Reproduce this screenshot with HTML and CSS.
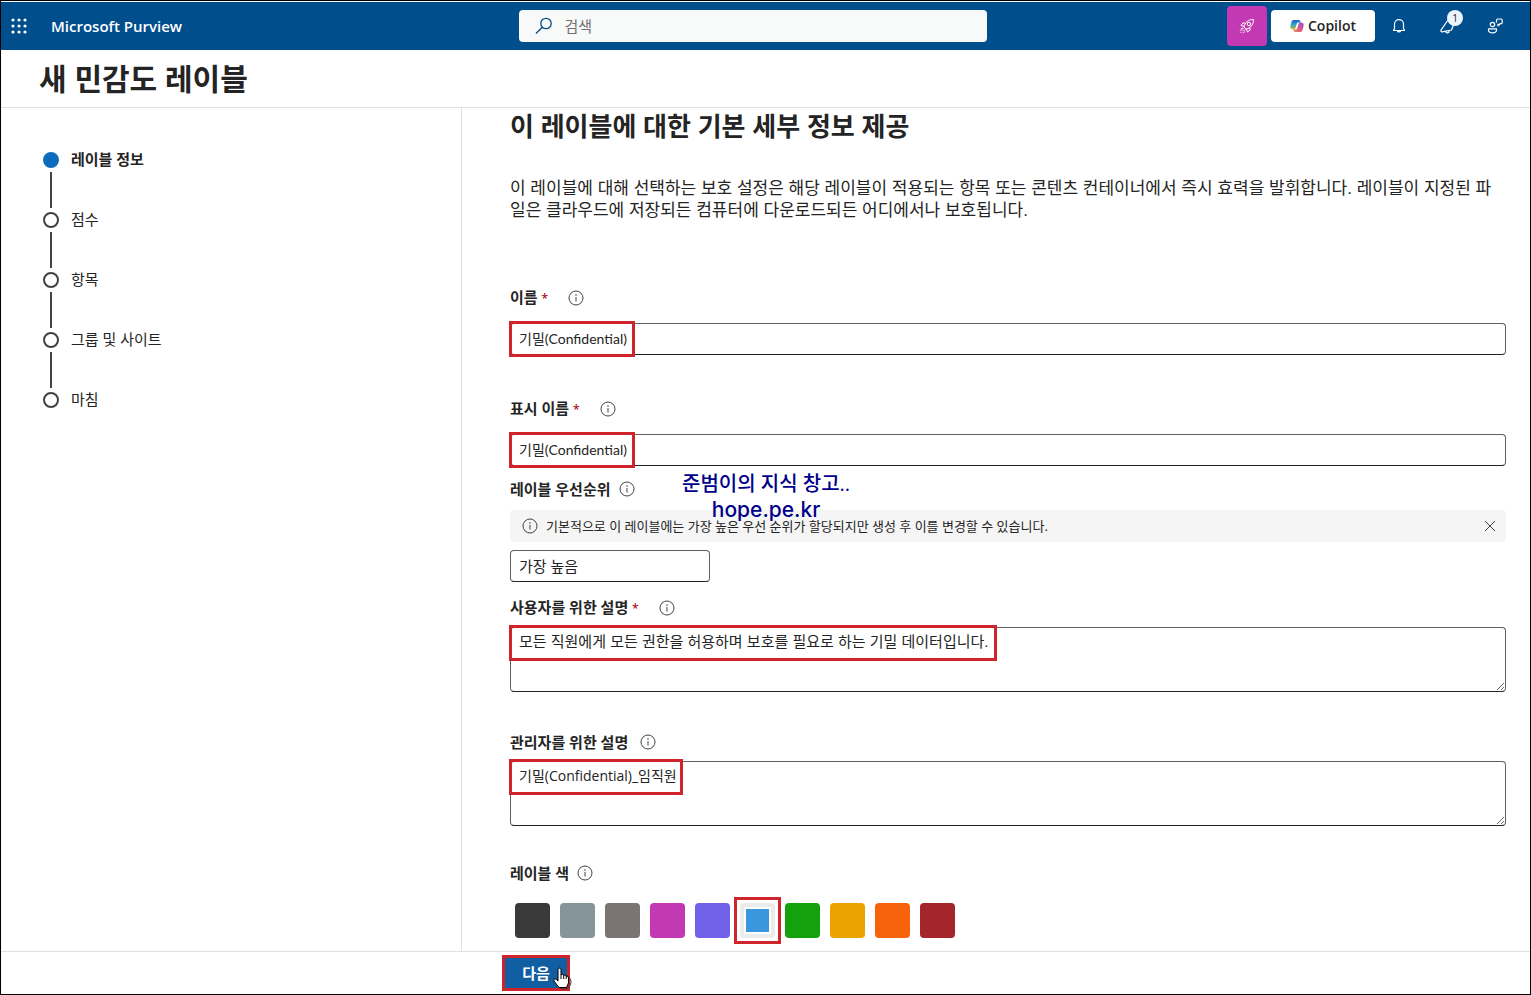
FILE: index.html
```html
<!DOCTYPE html>
<html lang="ko">
<head>
    <meta charset="UTF-8">
    <meta name="viewport" content="width=device-width, initial-scale=1.0">
    <title>Microsoft Purview</title>
    <link rel="stylesheet" href="styles.css">
</head>
<body>
    <svg width="0" height="0" class="sprite" aria-hidden="true">
        <symbol id="info" viewBox="0 0 16 16">
            <circle cx="8" cy="8" r="7" fill="none" stroke="currentColor"/>
            <path d="M8 7v4.500" fill="none" stroke="currentColor"/>
            <circle cx="8" cy="5" r=".8" fill="currentColor"/>
        </symbol>
    </svg>

    <header class="topbar">
        <div class="brand">
            <button class="icon-btn" aria-label="앱 시작 관리자">
                <svg width="16" height="16" viewBox="0 0 16 16" fill="#fff">
                    <circle cx="2" cy="2" r="1.600"/><circle cx="8" cy="2" r="1.600"/><circle cx="14" cy="2" r="1.600"/>
                    <circle cx="2" cy="8" r="1.600"/><circle cx="8" cy="8" r="1.600"/><circle cx="14" cy="8" r="1.600"/>
                    <circle cx="2" cy="14" r="1.600"/><circle cx="8" cy="14" r="1.600"/><circle cx="14" cy="14" r="1.600"/>
                </svg>
            </button>
            <a href="#" class="brand-name">Microsoft Purview</a>
        </div>
        <div class="search">
            <svg width="18" height="18" viewBox="0 0 18 18" fill="none" stroke="#0b4a80" stroke-width="1.300">
                <circle cx="11" cy="6.500" r="5.200"/>
                <path d="M7.300 10.200L1 16.500"/>
            </svg>
            <input type="search" placeholder="검색" aria-label="검색">
        </div>
        <div class="actions">
            <button class="rocket" aria-label="새로운 기능">
                <svg width="16" height="16" viewBox="0 0 16 16" fill="none" stroke="#fff" stroke-linejoin="round" stroke-linecap="round">
                    <path d="M5 8.500C6 4.500 9 1.500 14.500 1.500C14.500 7 11.500 10 7.500 11Z"/>
                    <circle cx="10" cy="6" r="1.700"/>
                    <path d="M6.200 5.200L4 4.800L2 7.500L5 8.500M10.800 9.800L11.200 12L8.500 14L7.500 11M4.500 10L1.500 13M6 11.500L4.500 13M3 10L2 11M5.500 13.800L4.500 14.800M2 14.500h.1"/>
                </svg>
            </button>
            <button class="copilot">
                <svg width="14" height="14" viewBox="0 0 14 14">
                    <defs>
                        <linearGradient id="cool" x1="0" y1="0" x2="0" y2="1">
                            <stop offset="0" stop-color="#1b62d4"/><stop offset=".5" stop-color="#2ba8c9"/><stop offset="1" stop-color="#e5b52c"/>
                        </linearGradient>
                        <linearGradient id="warm" x1="1" y1="0" x2="0" y2="1">
                            <stop offset="0" stop-color="#8c4fe0"/><stop offset=".5" stop-color="#dd5587"/><stop offset="1" stop-color="#f58a42"/>
                        </linearGradient>
                    </defs>
                    <path d="M4 1h4.500c1 0 1.600.600 1.900 1.500l.3 1H8.500c-1 0-1.500.500-1.800 1.500L5.500 9c-.3 1-.8 1.500-1.700 1.500H3C1 10.500 0 9 .4 7L1.500 3C1.900 1.600 2.800 1 4 1Z" fill="url(#cool)"/>
                    <path d="M10 13H5.500c-1 0-1.600-.6-1.900-1.500l-.3-1h2.200c1 0 1.500-.5 1.800-1.500L8.500 5c.3-1 .8-1.500 1.700-1.500h.8c2 0 3 1.500 2.600 3.500L12.500 11c-.4 1.400-1.300 2-2.500 2Z" fill="url(#warm)"/>
                </svg>
                Copilot
            </button>
            <button class="icon-btn" aria-label="알림">
                <svg width="16" height="16" viewBox="0 0 16 16" fill="none" stroke="#fff" stroke-width="1.200" stroke-linejoin="round">
                    <path d="M3.500 10.500V6.200a4.500 4.500 0 0 1 9 0v4.300l1 2h-11ZM6.300 12.700a1.800 1.800 0 0 0 3.400 0"/>
                </svg>
            </button>
            <button class="icon-btn with-badge" aria-label="공지">
                <svg width="16" height="16" viewBox="0 0 16 16" fill="none" stroke="#fff" stroke-width="1.200" stroke-linejoin="round">
                    <path d="M9 2L2 12.200c-.4.800.2 1.800 1.200 1.700L12.500 12L14.500 7M6.500 13.400c.5 2.200 4 1.800 3.800-.8"/>
                </svg>
                <span class="badge">1</span>
            </button>
            <button class="icon-btn" aria-label="피드백">
                <svg width="16" height="16" viewBox="0 0 16 16" fill="none" stroke="#fff" stroke-width="1.200" stroke-linejoin="round">
                    <circle cx="5.500" cy="6.500" r="2.200"/>
                    <path d="M1.500 10.800h8v1.500c0 3.300-8 3.300-8 0ZM9.500 4.500V2.200C9.500 1.500 10 1 10.700 1h3.300c.7 0 1.200.500 1.200 1.200v2.300c0 .7-.5 1.200-1.200 1.200h-.8L11 7.800V5.700"/>
                </svg>
            </button>
        </div>
    </header>

    <div class="titlebar">
        <h1>새 민감도 레이블</h1>
    </div>

    <div class="wizard">
        <nav class="steps">
            <ol>
                <li class="active">레이블 정보</li>
                <li>점수</li>
                <li>항목</li>
                <li>그룹 및 사이트</li>
                <li>마침</li>
            </ol>
        </nav>

        <main class="content">
            <h2>이 레이블에 대한 기본 세부 정보 제공</h2>
            <p class="intro">이 레이블에 대해 선택하는 보호 설정은 해당 레이블이 적용되는 항목 또는 콘텐츠 컨테이너에서 즉시 효력을 발휘합니다. 레이블이 지정된 파일은 클라우드에 저장되든 컴퓨터에 다운로드되든 어디에서나 보호됩니다.</p>

            <div class="field">
                <div class="label-row required">
                    <label for="name">이름 <span class="star">*</span></label>
                    <button class="info" aria-label="이름 정보"><svg><use href="#info"/></svg></button>
                </div>
                <div class="control">
                    <input type="text" id="name" value="기밀(Confidential)">
                    <span class="mark mark-short"></span>
                </div>
            </div>

            <div class="field">
                <div class="label-row required">
                    <label for="displayName">표시 이름 <span class="star">*</span></label>
                    <button class="info" aria-label="표시 이름 정보"><svg><use href="#info"/></svg></button>
                </div>
                <div class="control">
                    <input type="text" id="displayName" value="기밀(Confidential)">
                    <span class="mark mark-short"></span>
                </div>
            </div>

            <div class="priority">
                <div class="label-row">
                    <label for="priority">레이블 우선순위</label>
                    <button class="info" aria-label="레이블 우선순위 정보"><svg><use href="#info"/></svg></button>
                </div>
                <div class="message">
                    <svg class="message-icon"><use href="#info"/></svg>
                    <span>기본적으로 이 레이블에는 가장 높은 우선 순위가 할당되지만 생성 후 이를 변경할 수 있습니다.</span>
                    <button class="close" aria-label="닫기">
                        <svg width="12" height="12" viewBox="0 0 12 12" stroke="#424242"><path d="M1 1l10 10M11 1L1 11"/></svg>
                    </button>
                </div>
                <input type="text" id="priority" class="short" value="가장 높음" readonly>
                <div class="watermark">
                    <div>준범이의 지식 창고..</div>
                    <div class="watermark-url">hope.pe.kr</div>
                </div>
            </div>

            <div class="description">
                <div class="label-row required">
                    <label for="userDesc">사용자를 위한 설명 <span class="star">*</span></label>
                    <button class="info" aria-label="사용자를 위한 설명 정보"><svg><use href="#info"/></svg></button>
                </div>
                <div class="control">
                    <textarea id="userDesc">모든 직원에게 모든 권한을 허용하며 보호를 필요로 하는 기밀 데이터입니다.</textarea>
                    <span class="mark mark-long"></span>
                </div>
            </div>

            <div class="description">
                <div class="label-row optional">
                    <label for="adminDesc">관리자를 위한 설명</label>
                    <button class="info" aria-label="관리자를 위한 설명 정보"><svg><use href="#info"/></svg></button>
                </div>
                <div class="control">
                    <textarea id="adminDesc" class="mixed">기밀(Confidential)_임직원</textarea>
                    <span class="mark mark-medium"></span>
                </div>
            </div>

            <div class="label-row">
                <span id="colorLabel" class="label">레이블 색</span>
                <button class="info" aria-label="레이블 색 정보"><svg><use href="#info"/></svg></button>
            </div>
            <div class="colors" role="radiogroup" aria-labelledby="colorLabel">
                <input type="radio" name="color" class="charcoal" aria-label="진회색">
                <input type="radio" name="color" class="steel" aria-label="청회색">
                <input type="radio" name="color" class="taupe" aria-label="회갈색">
                <input type="radio" name="color" class="magenta" aria-label="자홍색">
                <input type="radio" name="color" class="violet" aria-label="보라색">
                <div class="swatch-selected">
                    <input type="radio" name="color" class="blue" aria-label="파란색" checked>
                    <span class="mark mark-swatch"></span>
                </div>
                <input type="radio" name="color" class="green" aria-label="녹색">
                <input type="radio" name="color" class="yellow" aria-label="노란색">
                <input type="radio" name="color" class="orange" aria-label="주황색">
                <input type="radio" name="color" class="red" aria-label="빨간색">
            </div>
        </main>
    </div>

    <footer class="footer">
        <div class="next-wrap">
            <button class="next">다음</button>
            <span class="mark mark-button"></span>
            <svg class="cursor" width="20" height="24" viewBox="0 0 20 24">
                <circle cx="12" cy="15" r="7" fill="none" stroke="#333"/>
                <path d="M6 3c0-2.500 3-2.500 3 0v5c1-1 2.500-.6 2.700.6c1-.8 2.400-.4 2.500.8c1.200-.6 2.300.2 2.300 1.500V16l-2 4.500H7L2 14c-1-1.500.8-3 2.200-1.600L6 14Z" fill="#fff" stroke="#000"/>
                <path d="M9 8v4M11.700 8.600V12M14.200 9.400V12" stroke="#000"/>
            </svg>
        </div>
    </footer>
</body>
</html>
```

FILE: styles.css
```css
*, *::before, *::after {
    box-sizing: border-box;
}
body {
    display: flex;
    flex-direction: column;
    min-height: 100vh;
    margin: 0;
    border: 1px solid #000;
    background: #fff;
    color: #242424;
    font-family: "Open Sans", "Noto Sans CJK KR", sans-serif;
    font-size: 15px;
    line-height: 20px;
}
h1, h2, p, ol {
    margin: 0;
    padding: 0;
}
button, input, textarea {
    font: inherit;
    color: inherit;
    margin: 0;
}
button {
    padding: 0;
    border: none;
    background: none;
    cursor: pointer;
}
svg {
    display: block;
}
.sprite {
    position: absolute;
}

/* top bar */
.topbar {
    display: grid;
    grid-template-columns: 1fr 468px 1fr;
    align-items: center;
    height: 49px;
    padding: 0 28px 0 2px;
    border-top: 1px solid #fff;
    background: #004e8c;
    color: #fff;
}
.brand, .actions {
    display: flex;
    align-items: center;
}
.brand {
    gap: 16px;
}
.brand-name {
    color: #fff;
    font-weight: 600;
    text-decoration: none;
}
.icon-btn {
    display: flex;
    align-items: center;
    justify-content: center;
    width: 32px;
    height: 32px;
}
.search {
    display: flex;
    align-items: center;
    gap: 10px;
    height: 32px;
    padding: 0 16px;
    border-radius: 4px;
    background: #f8f9f9;
}
.search input {
    flex: 1;
    border: none;
    outline: none;
    background: none;
    color: #616161;
}
.search input::placeholder {
    color: #707070;
}
.actions {
    justify-content: flex-end;
    gap: 16px;
    margin-right: -9px;
}
.rocket {
    display: flex;
    align-items: center;
    justify-content: center;
    width: 40px;
    height: 40px;
    margin-right: -12px;
    border-radius: 4px;
    background: #c239b3;
}
.copilot {
    display: flex;
    align-items: center;
    justify-content: center;
    gap: 4px;
    width: 104px;
    height: 32px;
    margin-right: -8px;
    border-radius: 4px;
    background: #fff;
    color: #242424;
    font-size: 14px;
    font-weight: 600;
}
.with-badge {
    position: relative;
}
.badge {
    position: absolute;
    top: 0;
    right: 0;
    width: 16px;
    height: 16px;
    border-radius: 50%;
    background: #ebf3fc;
    color: #242424;
    font-size: 10px;
    line-height: 16px;
}

/* page title */
.titlebar {
    height: 58px;
    padding: 11px 38px;
    border-bottom: 1px solid #e0e0e0;
}
.titlebar h1 {
    font-size: 30px;
    line-height: 36px;
}

/* wizard */
.wizard {
    flex: 1;
    display: flex;
}
.steps {
    flex: 0 0 461px;
    padding: 44px 42px;
    border-right: 1px solid #e0e0e0;
}
.steps ol {
    list-style: none;
}
.steps li {
    position: relative;
    height: 60px;
    padding-left: 28px;
    line-height: 14px;
}
.steps li::before {
    content: "";
    position: absolute;
    left: 0;
    top: 0;
    width: 16px;
    height: 16px;
    border: 2px solid #424242;
    border-radius: 50%;
}
.steps li::after {
    content: "";
    position: absolute;
    left: 7px;
    top: 20px;
    width: 2px;
    height: 36px;
    background: #424242;
}
.steps li:last-child::after {
    display: none;
}
.steps .active {
    font-weight: 600;
}
.steps .active::before {
    border-color: #0f6cbd;
    background: #0f6cbd;
}
.content {
    flex: 1;
    min-width: 0;
    padding: 2px 24px 12px 48px;
}
.content h2 {
    margin-bottom: 36px;
    font-size: 26px;
    line-height: 32px;
}
.intro {
    margin-bottom: 66px;
    font-family: "Liberation Sans", "Noto Sans CJK KR", sans-serif;
    font-size: 17px;
    line-height: 22px;
}

/* form */
.label-row {
    display: flex;
    align-items: center;
    gap: 8px;
    height: 20px;
}
.label-row label, .label {
    font-weight: 600;
}
.optional {
    gap: 12px;
}
.required {
    gap: 20px;
}
.star {
    color: #b10e1c;
    font-size: 12px;
}
.info svg, .message-icon {
    width: 16px;
    height: 16px;
    color: #424242;
}
.control {
    position: relative;
}
input[type="text"], textarea {
    display: block;
    width: 100%;
    height: 32px;
    padding: 0 8px 2px;
    border: 1px solid #616161;
    border-bottom-color: #242424;
    border-radius: 4px;
    outline: none;
    background: #fff;
}
textarea {
    height: 65px;
    padding: 4px 8px;
    font-family: "Liberation Sans", "Noto Sans CJK KR", sans-serif;
    resize: vertical;
}
.field input[type="text"] {
    font-family: Lato, "Noto Sans CJK KR", sans-serif;
    font-size: 14px;
}
.mixed {
    font-family: "Open Sans", "Noto Sans CJK KR", sans-serif;
    font-size: 14px;
}
.field {
    margin-bottom: 44px;
}
.field .label-row {
    margin-bottom: 15px;
}
.priority {
    position: relative;
    margin: -31px 0 16px;
}
.message {
    display: flex;
    align-items: center;
    gap: 8px;
    height: 32px;
    margin: 11px 0 8px;
    padding: 0 10px 0 12px;
    border-radius: 4px;
    background: #f5f5f5;
    font-size: 13px;
}
.close {
    margin-left: auto;
}
.priority .short {
    width: 200px;
}
.watermark {
    position: absolute;
    left: 172px;
    top: -8px;
    color: #00008b;
    font-size: 20px;
    font-weight: 500;
    line-height: 26px;
    text-align: center;
}
.watermark-url {
    font-family: Inter, sans-serif;
    font-size: 21px;
}
.description {
    margin-bottom: 40px;
}
.description .label-row {
    margin-bottom: 9px;
}
.description + .label-row {
    margin-top: -3px;
}

/* red frames round the values to enter */
.mark {
    position: absolute;
    left: -1px;
    top: -2px;
    height: 36px;
    border: 3px solid #d0242d;
    pointer-events: none;
}
.mark-short {
    width: 126px;
}
.mark-medium {
    width: 174px;
}
.mark-long {
    width: 488px;
}

/* label colours */
.colors {
    display: flex;
    gap: 10px;
    margin: 20px 5px 0;
}
.colors input {
    display: block;
    appearance: none;
    width: 35px;
    height: 35px;
    border-radius: 4px;
}
.swatch-selected {
    position: relative;
}
.colors input:checked {
    border: 4px solid #ebebeb;
    box-shadow: inset 0 0 0 2px #fff;
}
.mark-swatch {
    left: -6px;
    top: -6px;
    width: 47px;
    height: 47px;
}
.charcoal { background: #393939; }
.steel { background: #859599; }
.taupe { background: #7a7574; }
.magenta { background: #c239b3; }
.violet { background: #7160e8; }
.blue { background: #3a96dd; }
.green { background: #13a10e; }
.yellow { background: #eaa300; }
.orange { background: #f7630c; }
.red { background: #a4262c; }

/* footer */
.footer {
    height: 43px;
    padding: 5px 503px;
    border-top: 1px solid #e0e0e0;
}
.next-wrap {
    position: relative;
    width: 64px;
}
.next {
    width: 64px;
    height: 32px;
    border-radius: 4px;
    background: #115ea3;
    color: #fff;
    font-weight: 600;
}
.mark-button {
    left: -2px;
    width: 68px;
}
.cursor {
    position: absolute;
    left: 48px;
    top: 10px;
}
```
